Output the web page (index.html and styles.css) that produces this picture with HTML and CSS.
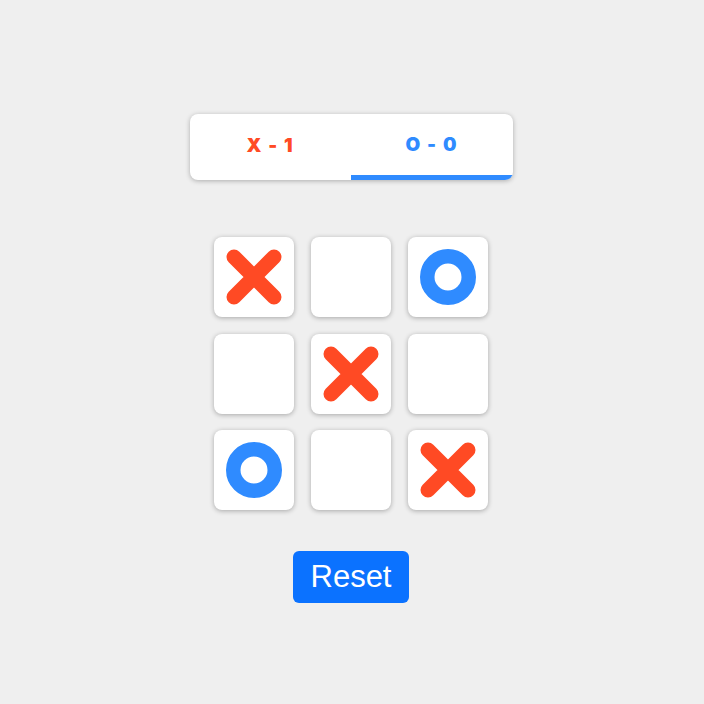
FILE: index.html
```html
<!DOCTYPE html>
<html>
<head>
<meta charset="utf-8">
<link rel="stylesheet" href="styles.css">
</head>
<body>
<main class="game">
  <div class="score">
    <div class="score-side x">X - 1</div>
    <div class="score-side o active">O - 0</div>
  </div>
  <div class="board">
    <div class="cell"><svg viewBox="0 0 80 80"><path class="mark-x" d="M20 20 L60 60 M60 20 L20 60"/></svg></div>
    <div class="cell"></div>
    <div class="cell"><svg viewBox="0 0 80 80"><circle class="mark-o" cx="40" cy="40" r="20.75"/></svg></div>
    <div class="cell"></div>
    <div class="cell"><svg viewBox="0 0 80 80"><path class="mark-x" d="M20 20 L60 60 M60 20 L20 60"/></svg></div>
    <div class="cell"></div>
    <div class="cell"><svg viewBox="0 0 80 80"><circle class="mark-o" cx="40" cy="40" r="20.75"/></svg></div>
    <div class="cell"></div>
    <div class="cell"><svg viewBox="0 0 80 80"><path class="mark-x" d="M20 20 L60 60 M60 20 L20 60"/></svg></div>
  </div>
  <button class="reset">Reset</button>
</main>
</body>
</html>
```
FILE: styles.css
```css
html, body {
  margin: 0;
  padding: 0;
  background: #efefef;
}
.game {
  display: flex;
  flex-direction: column;
  align-items: center;
  padding-top: 114px;
  padding-right: 2px;
}
.score {
  display: flex;
  width: 323px;
  height: 66px;
  background: #fff;
  border-radius: 8px;
  overflow: hidden;
  box-shadow: 0 1px 5px rgba(0,0,0,0.28);
}
.score-side {
  flex: 1;
  display: flex;
  align-items: center;
  justify-content: center;
  font-family: "Inter", "DejaVu Sans", sans-serif;
  font-weight: 900;
  font-size: 19px;
  letter-spacing: 1.5px;
  box-sizing: border-box;
  padding-bottom: 3px;
}
.score-side.x { color: #ff4a24; }
.score-side.o { color: #2f8bff; }
.score-side.active {
  border-bottom: 5px solid #2f8bff;
  padding-bottom: 0;
}
.board {
  margin-top: 57px;
  display: grid;
  grid-template-columns: repeat(3, 80px);
  grid-auto-rows: 80px;
  column-gap: 17px;
  row-gap: 16.5px;
}
.cell {
  background: #fff;
  border-radius: 8px;
  box-shadow: 0 1px 5px rgba(0,0,0,0.3);
  display: flex;
}
.cell svg {
  width: 80px;
  height: 80px;
}
.mark-x {
  stroke: #ff4a24;
  stroke-width: 15;
  stroke-linecap: round;
  fill: none;
}
.mark-o {
  stroke: #2f8bff;
  stroke-width: 14.5;
  fill: none;
}
.reset {
  margin-top: 41px;
  width: 116px;
  height: 52px;
  border: none;
  border-radius: 6px;
  background: #0b72ff;
  color: #fff;
  font-family: "Liberation Sans", Arial, sans-serif;
  font-size: 31px;
  padding: 0;
  cursor: pointer;
}
```
